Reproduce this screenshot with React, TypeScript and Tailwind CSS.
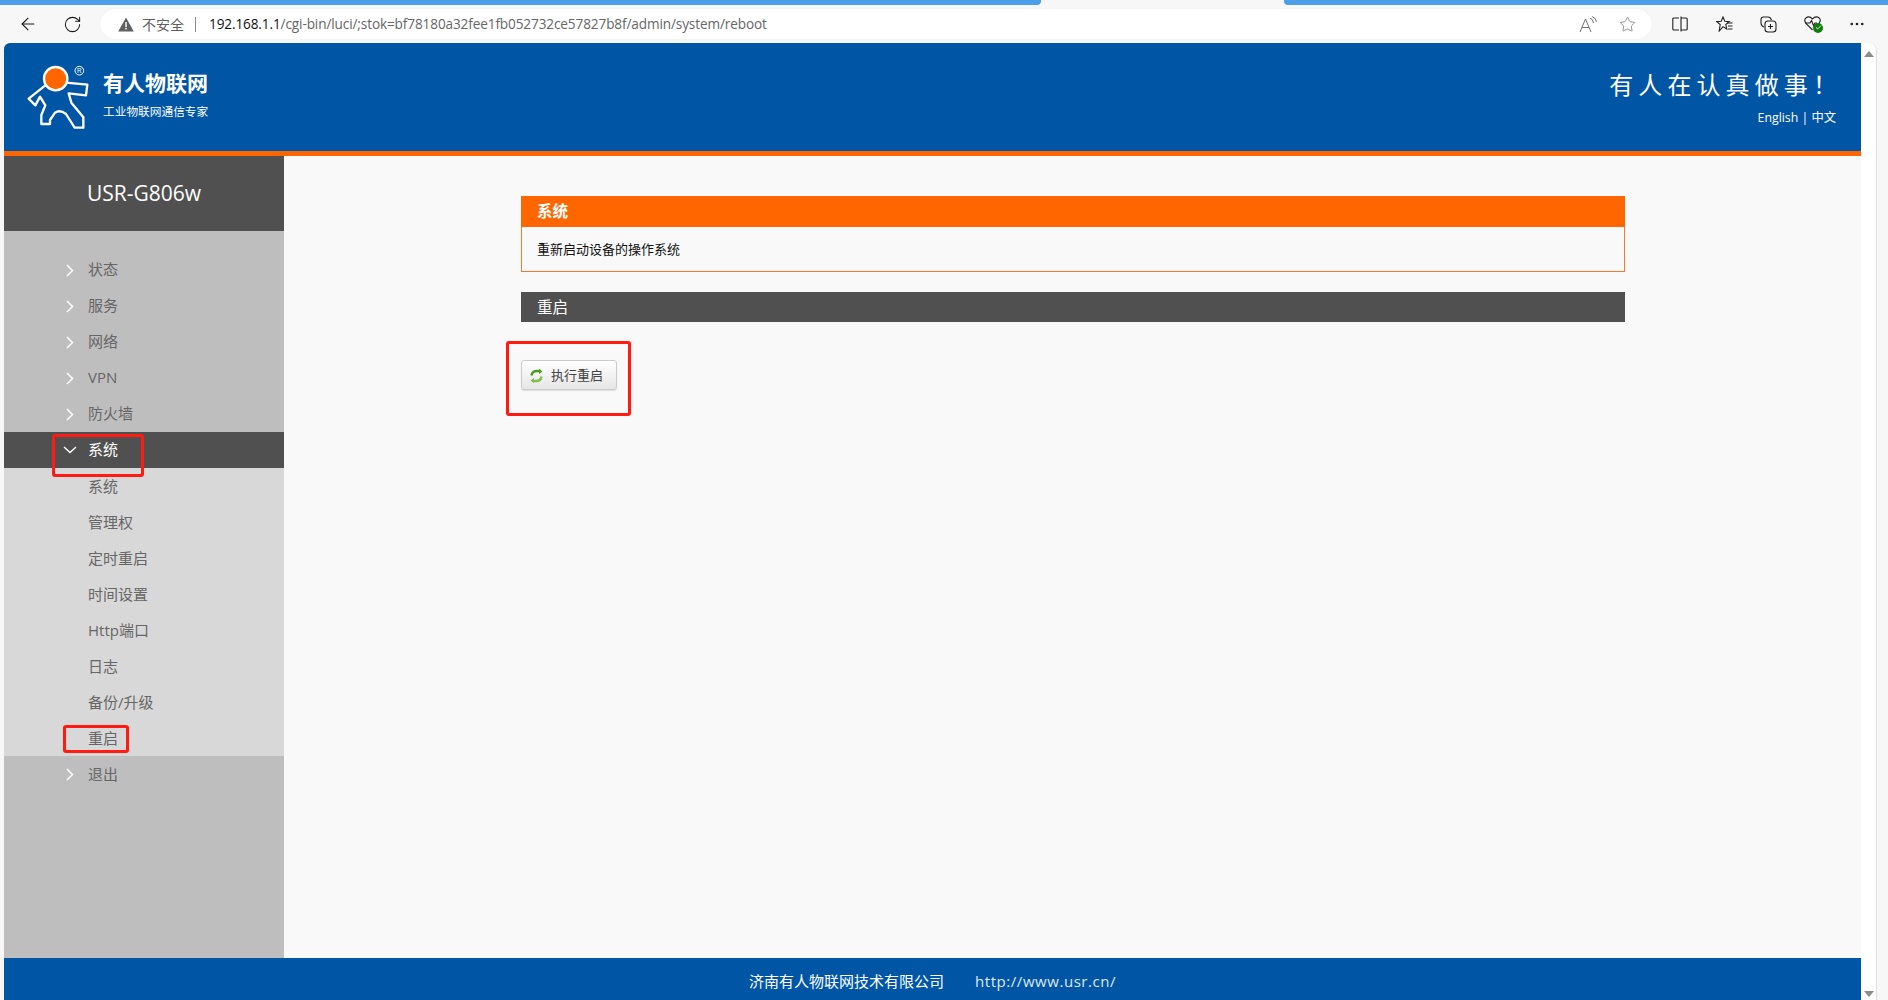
import React from "react";
import { ArrowLeft, RotateCw, Star, MoreHorizontal, Check } from "lucide-react";

const cjk = "font-['Open_Sans','Noto_Sans_CJK_SC',sans-serif]";

const topMenu = ["状态", "服务", "网络", "VPN", "防火墙"];
const subMenu = ["系统", "管理权", "定时重启", "时间设置", "Http端口", "日志", "备份/升级"];

// Red annotation frame drawn over the screenshot
const RedBox: React.FC<{ className: string }> = ({ className }) => (
    <div className={`absolute border-[3px] border-[#ff1a12] rounded-[3px] pointer-events-none ${className}`} />
);

const Logo: React.FC = () => (
    <svg width="70" height="72" viewBox="72 60 210 216" fill="none">
        <circle cx="167" cy="116" r="35" fill="#ff6600" stroke="#fff" strokeWidth="7" />
        <path
            d="M198 128 L262 134 L258 166 L206 160 L214 188 L250 232 L250 263 L224 263 L198 222 Q180 208 165 218 L150 240 L150 252 L124 252 L124 225 L136 196 L120 170 L106 196 L86 176 L136 136"
            stroke="#fff"
            strokeWidth="7"
            strokeLinejoin="round"
        />
        <circle cx="238" cy="92" r="13" stroke="#fff" strokeWidth="3" />
        <text x="238" y="99" fontSize="19" fill="#fff" textAnchor="middle" fontFamily="Liberation Sans">R</text>
    </svg>
);

const MenuChevron: React.FC = () => (
    <svg className="shrink-0" width="8" height="13" viewBox="0 0 8 13" fill="none" stroke="#fff" strokeWidth="1.5">
        <path d="M1 1 L6.5 6.5 L1 12" />
    </svg>
);

const BrowserToolbar: React.FC = () => (
    <div className="h-[38px] flex items-center text-[#1a1a1a]">
        <ArrowLeft className="ml-[18px] w-[20px] h-[20px]" strokeWidth={1.3} />
        <RotateCw className="ml-[25px] w-[19px] h-[19px]" strokeWidth={1.3} />
        <div className="ml-[18px] w-[1552px] h-[30px] bg-white rounded-full flex items-center shadow-[0_0_1px_#ddd]">
            <svg className="ml-[18px]" width="16" height="15" viewBox="0 0 16 15">
                <path d="M8 0.5 L15.8 14.5 H0.2 Z" fill="#5f5f5f" />
                <rect x="7.3" y="5" width="1.4" height="5.2" fill="#fff" />
                <rect x="7.3" y="11" width="1.4" height="1.5" fill="#fff" />
            </svg>
            <span className="ml-[8px] text-[14px] text-[#5f5f5f] font-['Noto_Sans_CJK_SC',sans-serif]">不安全</span>
            <span className="ml-[11px] w-px h-[15px] bg-[#8a8a8a]" />
            <span className="ml-[13px] text-[13.6px] font-['Open_Sans',sans-serif] text-[#666] tracking-[-0.12px] whitespace-nowrap">
                <span className="text-[#111]">192.168.1.1</span>/cgi-bin/luci/;stok=bf78180a32fee1fb052732ce57827b8f/admin/system/reboot
            </span>
            <svg className="ml-auto" width="18" height="17" viewBox="0 0 18 17" fill="none" stroke="#707070" strokeWidth="1">
                <path d="M1 16 L6.5 3 L12 16 M3 11.5 H10" />
                <path d="M11 2 Q14 3 14.5 7 M13 0.5 Q17 2 17.5 6" />
            </svg>
            <Star className="ml-[22px] mr-[16px] w-[17px] h-[17px] text-[#707070]" strokeWidth={1.1} />
        </div>
        <svg className="ml-[20px]" width="16" height="16" viewBox="0 0 16 16" fill="none" stroke="#222" strokeWidth="1.1">
            <path d="M7 2 H2 Q0.8 2 0.8 3 V13 Q0.8 14 2 14 H7 M9 0.5 V15.5 M9 2 H14 Q15.2 2 15.2 3 V13 Q15.2 14 14 14 H9" />
        </svg>
        <svg className="ml-[28px]" width="17" height="16" viewBox="0 0 17 16" fill="none" stroke="#222" strokeWidth="1.1">
            <path d="M7 1 L8.8 5.3 L13.2 5.6 L9.8 8.5 L10.8 13 L7 10.6 L3.2 15 L4.2 8.5 L0.8 5.6 L5.2 5.3 Z" />
            <path d="M11 7 H16.5 M12 10 H16.5 M12 13 H16.5" />
        </svg>
        <svg className="ml-[27px]" width="17" height="17" viewBox="0 0 17 17" fill="none" stroke="#222" strokeWidth="1.1">
            <path d="M4 11 Q1 10 1 7 L1 3.5 Q1 1 3.5 1 L8 1 Q10.5 1 11.5 4" />
            <rect x="5" y="5" width="11" height="11" rx="3" />
            <path d="M10.5 8 V13 M8 10.5 H13" />
        </svg>
        <div className="ml-[27px] relative w-[19px] h-[17px]">
            <svg width="17" height="15" viewBox="0 0 17 15" fill="none" stroke="#222" strokeWidth="1.1">
                <path d="M8.5 14 L2 7.5 Q-0.5 4 2 1.8 Q5.5 -0.5 8.5 3 Q11.5 -0.5 15 1.8 Q17.5 4 15 7.5 L13 9.5" />
                <path d="M1 7 H6 L7.5 4.5 L9.5 9.5 L11 7 H13" />
            </svg>
            <span className="absolute right-0 bottom-0 w-[10px] h-[10px] rounded-full bg-[#107c10] flex items-center justify-center">
                <Check className="w-[7px] h-[7px] text-white" strokeWidth={3} />
            </span>
        </div>
        <MoreHorizontal className="ml-[25px] w-[18px] h-[18px] text-[#222]" strokeWidth={1.6} />
    </div>
);

const SiteHeader: React.FC = () => (
    <div className="h-[108px] bg-[#0056a5] flex items-center text-white rounded-tl-[6px] shrink-0">
        <div className="ml-[20px] mt-[-2px]">
            <Logo />
        </div>
        <div className="ml-[9px] mt-[-8px]">
            <div className="text-[21px] font-bold leading-[28px] font-['Noto_Sans_CJK_SC',sans-serif]">有人物联网</div>
            <div className="text-[11.7px] leading-[16px] mt-[7px] font-['Noto_Sans_CJK_SC',sans-serif]">工业物联网通信专家</div>
        </div>
        <div className="ml-auto mr-[25px] text-right">
            <div className="text-[24px] leading-[32px] tracking-[5.1px] -mr-[6px] mt-[1px] font-['Noto_Sans_CJK_SC',sans-serif]">有人在认真做事！</div>
            <div className={`text-[12.3px] leading-[18px] mt-[9px] ${cjk}`}>English | 中文</div>
        </div>
    </div>
);

const Sidebar: React.FC = () => (
    <div className={`w-[280px] bg-[#bebebe] shrink-0 text-[15px] text-[#666] ${cjk}`}>
        <div className="h-[75px] bg-[#505050] flex items-center justify-center pt-[1px] text-white text-[21px]">USR-G806w</div>
        <div className="pt-[21px]">
            {topMenu.map((item) => (
                <div key={item} className="h-[36px] flex items-center pl-[62px]">
                    <MenuChevron />
                    <span className="ml-[14px] -mt-[1px]">{item}</span>
                </div>
            ))}
            <div className="relative h-[36px] flex items-center pl-[59px] bg-[#505050] text-white">
                <svg className="shrink-0" width="14" height="8" viewBox="0 0 14 8" fill="none" stroke="#fff" strokeWidth="1.5">
                    <path d="M1 1 L7 6.5 L13 1" />
                </svg>
                <span className="ml-[11px] -mt-[1px]">系统</span>
                <RedBox className="left-[48px] top-[2px] w-[92px] h-[43px]" />
            </div>
            <div className="bg-[#d8d8d8]">
                {subMenu.map((item) => (
                    <div key={item} className="h-[36px] flex items-center pl-[84px]">{item}</div>
                ))}
                <div className="relative h-[36px] flex items-center pl-[84px]">
                    重启
                    <RedBox className="left-[59px] top-[5px] w-[66px] h-[28px]" />
                </div>
            </div>
            <div className="h-[36px] flex items-center pl-[62px]">
                <MenuChevron />
                <span className="ml-[14px]">退出</span>
            </div>
        </div>
    </div>
);

const Scrollbar: React.FC = () => (
    <div className="w-[16px] bg-white border-r border-[#e0e0e0] rounded-tr-[8px] flex flex-col items-center justify-between pt-[8px] pb-[3px] shrink-0">
        <div className="w-0 h-0 border-x-[5px] border-x-transparent border-b-[6px] border-b-[#8c8c8c]" />
        <div className="w-0 h-0 border-x-[5px] border-x-transparent border-t-[6px] border-t-[#8c8c8c]" />
    </div>
);

export default function App() {
    return (
        <div className="w-[1888px] h-screen overflow-hidden bg-[#f7f7f7] flex flex-col">
            {/* tab strip */}
            <div className="h-[5px] flex shrink-0">
                <div className="w-[1041px] bg-[#4a9fe8] rounded-br-[4px]" />
                <div className="w-[243px] bg-[#f7f7f7]" />
                <div className="flex-1 bg-[#4a9fe8] rounded-bl-[4px]" />
            </div>
            <BrowserToolbar />
            <div className="flex-1 min-h-0 flex pl-[4px] pr-[11px]">
                <div className="flex-1 min-w-0 flex flex-col bg-[#f9f9f9]">
                    <SiteHeader />
                    <div className="h-[5px] bg-[#ff6600] shrink-0" />
                    <div className="flex-1 min-h-0 flex">
                        <Sidebar />
                        <div className={`pl-[237px] pt-[40px] ${cjk}`}>
                            <div className="w-[1104px]">
                                <div className="h-[31px] bg-[#ff6600] text-white text-[15.5px] font-bold flex items-center pl-[16px]">系统</div>
                                <div className="h-[45px] border border-t-0 border-[#f07a30] flex items-center pl-[15px] pt-[1px] text-[13px] text-[#111]">
                                    重新启动设备的操作系统
                                </div>
                                <div className="mt-[20px] h-[30px] bg-[#505050] text-white text-[15.5px] flex items-center pl-[16px] pt-[2px]">重启</div>
                            </div>
                            <div className="relative mt-[38px]">
                                <button className="w-[96px] h-[30px] border border-[#ccc] rounded-[3px] bg-gradient-to-b from-white to-[#e6e6e6] shadow-[0_1px_1px_#ddd] flex items-center pl-[8px] pt-[1px] text-[13px] text-[#444]">
                                    <svg width="13" height="14" viewBox="0 0 13 14" fill="none" strokeWidth="2.4">
                                        <path d="M1.5 6.5 Q2 2 7 2 L11 2" stroke="#4e9a1e" />
                                        <path d="M9 0 L12.5 2.5 L9 5 Z" fill="#4e9a1e" />
                                        <path d="M11.5 7.5 Q11 12 6 12 L2 12" stroke="#86bd4a" />
                                        <path d="M4 9 L0.5 11.5 L4 14 Z" fill="#86bd4a" />
                                    </svg>
                                    <span className="ml-[8px]">执行重启</span>
                                </button>
                                <RedBox className="-left-[15px] -top-[19px] w-[125px] h-[75px]" />
                            </div>
                        </div>
                    </div>
                    <div className={`h-[42px] bg-[#0056a5] text-white text-[15px] flex items-center shrink-0 pl-[745px] pt-[5px] ${cjk}`}>
                        <span>济南有人物联网技术有限公司</span>
                        <span className="ml-[31px] tracking-[0.55px] text-[#dfe9f5]">http://www.usr.cn/</span>
                    </div>
                </div>
                <Scrollbar />
            </div>
        </div>
    );
}
